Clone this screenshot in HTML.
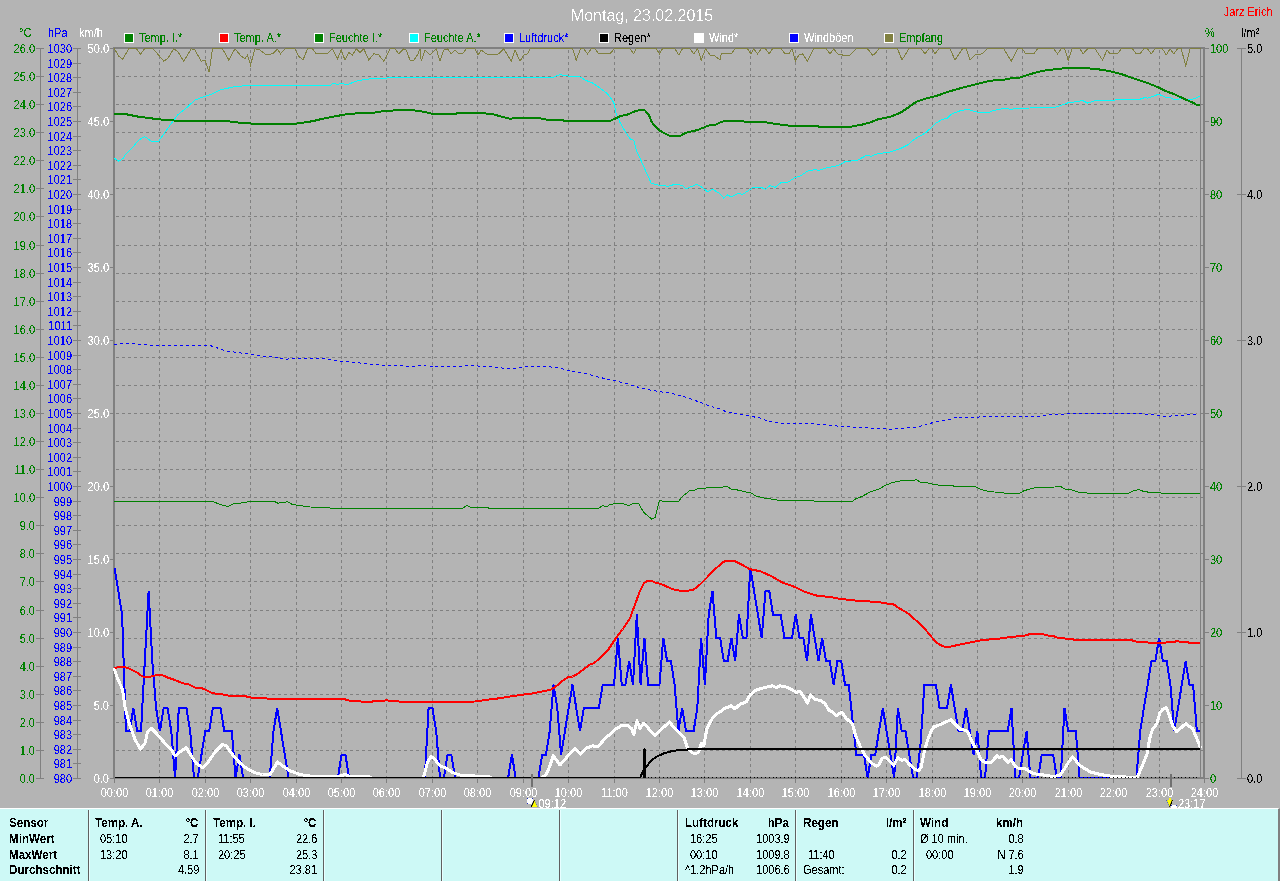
<!DOCTYPE html>
<html lang="de"><head><meta charset="utf-8"><title>Montag, 23.02.2015</title>
<style>
html,body{margin:0;padding:0;background:#b4b4b4;}
body{width:1280px;height:881px;position:relative;overflow:hidden;font-family:"Liberation Sans",Arial,sans-serif;}
.tbl{position:absolute;left:0;top:808px;width:1280px;height:73px;background:#cdf9f6;border-top:1px solid #fff;border-right:2px solid #808080;box-sizing:border-box;font-size:12px;color:#000;}
.dv{position:absolute;top:1px;bottom:0;width:1px;background:#606060;border-right:1px solid #e8ffff;}
.c{position:absolute;white-space:nowrap;line-height:14px;letter-spacing:0;filter:url(#na);transform:scaleX(.917);transform-origin:0 0;}
.r{transform-origin:100% 0;}
.b{font-weight:bold;transform:scaleX(.967);}
</style></head><body>
<svg width="1280" height="808" viewBox="0 0 1280 808" style="position:absolute;left:0;top:0" font-family="Liberation Sans, Arial, sans-serif" font-size="12px">
<rect width="1280" height="808" fill="#b4b4b4"/>
<defs><filter id="na" color-interpolation-filters="sRGB"><feComponentTransfer><feFuncA type="discrete" tableValues="0 0 0 0 0 0 0 0 0 1 1 1 1 1 1 1 1 1 1 1"/></feComponentTransfer></filter><filter id="nb" color-interpolation-filters="sRGB"><feComponentTransfer><feFuncA type="discrete" tableValues="0 0 0 0 0 0 0 0 0 0 0 0 0 1 1 1 1 1 1 1"/></feComponentTransfer></filter></defs>
<g shape-rendering="crispEdges" fill="none">
<path d="M116,750.5H1197M116,722.5H1197M116,694.5H1197M116,666.5H1197M116,638.5H1197M116,610.5H1197M116,581.5H1197M116,553.5H1197M116,525.5H1197M116,497.5H1197M116,469.5H1197M116,441.5H1197M116,413.5H1197M116,385.5H1197M116,357.5H1197M116,329.5H1197M116,301.5H1197M116,273.5H1197M116,245.5H1197M116,216.5H1197M116,188.5H1197M116,160.5H1197M116,132.5H1197M116,104.5H1197M116,76.5H1197" stroke="#808080" stroke-width="1" stroke-dasharray="3 3"/>
<path d="M159.5,50V778M205.5,50V778M250.5,50V778M296.5,50V778M341.5,50V778M386.5,50V778M432.5,50V778M477.5,50V778M523.5,50V778M568.5,50V778M614.5,50V778M659.5,50V778M704.5,50V778M750.5,50V778M795.5,50V778M841.5,50V778M886.5,50V778M932.5,50V778M977.5,50V778M1022.5,50V778M1068.5,50V778M1113.5,50V778M1159.5,50V778" stroke="#808080" stroke-width="1" stroke-dasharray="3 3"/>
<clipPath id="pc"><rect x="113" y="47" width="1092" height="731"/></clipPath>
<path d="M115,777.5H1203" stroke="#808080" stroke-width="1"/>
<path d="M114,47V779M113,48H1205M1204,47V779" stroke="#808080" stroke-width="2"/>
<g clip-path="url(#pc)">
<polyline points="114.0,48.2 118.8,56.2 122.5,59.5 128.8,48.8 136.2,48.2 140.5,54.2 144.5,48.8 152.5,48.8 157.5,53.8 163.8,61.2 167.5,58.8 173.8,48.8 177.5,51.2 183.8,61.2 191.2,48.8 195.0,50.0 201.2,61.2 205.0,60.0 209.2,72.0 212.5,48.8 222.5,48.8 228.8,60.0 235.0,48.8 241.2,56.2 245.0,58.8 247.5,55.0 250.5,65.0 255.0,48.8 260.0,50.0 266.2,55.0 272.5,53.8 277.5,49.2 280.5,53.8 285.0,48.8 295.0,48.8 298.8,56.2 303.0,60.0 307.5,48.8 312.5,48.8 316.2,53.8 327.5,53.8 332.5,48.8 337.5,58.8 341.2,50.0 345.0,60.0 348.8,52.5 352.5,55.0 356.2,48.8 360.0,52.5 363.8,48.8 368.8,60.0 373.8,53.8 378.8,55.0 383.8,61.2 390.0,48.8 395.0,48.8 398.8,53.8 403.8,48.8 406.2,50.0 410.0,60.0 413.8,60.0 417.5,55.0 420.0,48.8 421.2,61.2 425.0,50.0 430.0,55.0 436.2,48.8 440.0,61.2 443.8,50.0 447.5,48.8 451.2,53.8 455.0,50.0 458.8,53.8 462.5,53.8 466.2,48.8 475.0,48.8 478.2,55.0 481.2,50.0 486.2,53.8 492.5,55.0 498.8,53.8 503.8,48.8 511.2,61.2 515.0,50.0 520.0,61.2 523.8,55.0 527.5,53.8 530.0,48.8 572.5,48.8 576.2,60.0 580.5,48.8 583.8,48.8 587.5,53.8 591.2,48.8 595.0,48.8 598.8,53.8 610.0,53.8 614.2,48.8 630.0,48.8 633.8,53.8 636.2,48.8 656.2,48.8 659.5,53.8 662.5,48.8 675.0,48.8 678.8,55.0 682.5,48.8 690.0,48.8 693.8,53.8 697.5,48.8 701.2,60.0 705.5,48.8 710.0,55.0 713.8,55.0 720.0,60.0 721.2,53.8 731.2,53.8 735.0,48.8 747.5,48.8 750.8,53.8 753.8,48.8 757.5,53.8 761.2,48.8 765.5,48.8 769.2,53.8 772.5,48.8 781.2,48.8 785.0,53.8 788.8,53.8 792.0,48.8 795.5,61.2 798.8,55.0 802.5,53.8 807.5,61.2 813.8,48.8 826.2,48.8 830.0,53.8 833.8,48.8 837.5,53.8 842.5,55.0 850.0,55.0 856.2,48.8 867.5,48.8 872.5,55.0 875.0,53.8 878.8,48.8 897.5,48.8 902.0,60.0 908.8,48.8 921.2,48.8 925.0,53.8 928.8,48.8 932.5,48.8 935.0,53.8 938.8,48.8 950.0,48.8 955.0,60.0 962.5,48.8 966.2,48.8 970.0,60.0 975.0,55.0 982.5,53.8 987.5,48.8 1003.8,48.8 1011.2,61.2 1017.5,48.8 1020.0,48.8 1022.5,48.8 1025.5,53.8 1033.8,53.8 1037.5,48.8 1053.8,48.8 1057.5,53.8 1061.2,48.8 1064.5,48.8 1068.2,60.0 1072.0,48.8 1080.0,48.8 1083.2,53.8 1087.5,48.8 1095.0,48.8 1102.5,60.0 1107.0,50.0 1110.0,53.8 1117.5,53.8 1121.2,48.8 1132.5,48.8 1136.2,53.8 1140.0,53.8 1143.8,48.8 1147.5,48.8 1151.2,53.8 1155.0,48.8 1162.5,48.8 1166.2,55.0 1170.0,48.8 1173.8,53.8 1177.5,48.8 1181.2,48.8 1185.8,65.8 1190.0,48.8 1200.5,48.8" stroke="#808040" stroke-width="1"/>
<polyline points="114.5,567.8 118.3,591.1 122.1,614.5 125.9,731.3 129.6,731.3 133.4,707.9 137.2,731.3 141.0,731.3 144.8,661.2 148.6,591.1 152.3,661.2 156.1,707.9 159.9,731.3 163.7,707.9 167.5,707.9 171.3,731.3 175.1,778.0 178.8,707.9 182.6,707.9 186.4,707.9 190.2,731.3 194.0,778.0 197.8,778.0 201.5,754.6 205.3,731.3 209.1,731.3 212.9,707.9 216.7,707.9 220.5,707.9 224.3,731.3 228.0,731.3 231.8,731.3 235.6,778.0 239.4,754.6 243.2,778.0 247.0,778.0 250.8,778.0 254.5,778.0 258.3,778.0 262.1,778.0 265.9,778.0 269.7,778.0 273.5,731.3 277.2,707.9 281.0,731.3 284.8,754.6 288.6,778.0 292.4,778.0 296.2,778.0 300.0,778.0 303.7,778.0 307.5,778.0 311.3,778.0 315.1,778.0 318.9,778.0 322.7,778.0 326.4,778.0 330.2,778.0 334.0,778.0 337.8,778.0 341.6,754.6 345.4,754.6 349.2,778.0 352.9,778.0 356.7,778.0 360.5,778.0 364.3,778.0 368.1,778.0 371.9,778.0 375.6,778.0 379.4,778.0 383.2,778.0 387.0,778.0 390.8,778.0 394.6,778.0 398.4,778.0 402.1,778.0 405.9,778.0 409.7,778.0 413.5,778.0 417.3,778.0 421.1,778.0 424.8,778.0 428.6,707.9 432.4,707.9 436.2,731.3 440.0,778.0 443.8,778.0 447.6,754.6 451.3,754.6 455.1,778.0 458.9,778.0 462.7,778.0 466.5,778.0 470.3,778.0 474.0,778.0 477.8,778.0 481.6,778.0 485.4,778.0 489.2,778.0 493.0,778.0 496.8,778.0 500.5,778.0 504.3,778.0 508.1,778.0 511.9,754.6 515.7,778.0 519.5,778.0 523.2,778.0 527.0,778.0 530.8,778.0 534.6,778.0 538.4,778.0 542.2,754.6 546.0,754.6 549.7,731.3 553.5,684.6 557.3,707.9 561.1,754.6 564.9,731.3 568.7,707.9 572.5,684.6 576.2,707.9 580.0,731.3 583.8,707.9 587.6,707.9 591.4,707.9 595.2,707.9 598.9,707.9 602.7,684.6 606.5,684.6 610.3,684.6 614.1,684.6 617.9,637.8 621.7,684.6 625.4,684.6 629.2,661.2 633.0,684.6 636.8,614.5 640.6,684.6 644.4,637.8 648.1,684.6 651.9,684.6 655.7,684.6 659.5,684.6 663.3,637.8 667.1,661.2 670.9,661.2 674.6,684.6 678.4,731.3 682.2,707.9 686.0,731.3 689.8,731.3 693.6,731.3 697.3,707.9 701.1,637.8 704.9,684.6 708.7,614.5 712.5,591.1 716.3,637.8 720.1,637.8 723.8,661.2 727.6,661.2 731.4,637.8 735.2,661.2 739.0,614.5 742.8,637.8 746.5,637.8 750.3,567.8 754.1,591.1 757.9,614.5 761.7,637.8 765.5,591.1 769.3,591.1 773.0,614.5 776.8,614.5 780.6,614.5 784.4,637.8 788.2,637.8 792.0,637.8 795.8,614.5 799.5,637.8 803.3,637.8 807.1,661.2 810.9,614.5 814.7,637.8 818.5,661.2 822.2,637.8 826.0,661.2 829.8,661.2 833.6,684.6 837.4,661.2 841.2,661.2 845.0,684.6 848.7,684.6 852.5,719.6 856.3,754.6 860.1,754.6 863.9,754.6 867.7,778.0 871.4,754.6 875.2,754.6 879.0,731.3 882.8,707.9 886.6,731.3 890.4,754.6 894.2,778.0 897.9,707.9 901.7,731.3 905.5,731.3 909.3,754.6 913.1,778.0 916.9,778.0 920.6,743.0 924.4,684.6 928.2,684.6 932.0,684.6 935.8,684.6 939.6,707.9 943.4,707.9 947.1,707.9 950.9,684.6 954.7,707.9 958.5,731.3 962.3,731.3 966.1,707.9 969.8,731.3 973.6,754.6 977.4,731.3 981.2,778.0 985.0,778.0 988.8,731.3 992.6,731.3 996.3,731.3 1000.1,731.3 1003.9,731.3 1007.7,731.3 1011.5,707.9 1015.3,778.0 1019.0,778.0 1022.8,754.6 1026.6,731.3 1030.4,778.0 1034.2,778.0 1038.0,778.0 1041.8,754.6 1045.5,754.6 1049.3,754.6 1053.1,754.6 1056.9,778.0 1060.7,778.0 1064.5,707.9 1068.2,731.3 1072.0,731.3 1075.8,731.3 1079.6,778.0 1083.4,778.0 1087.2,778.0 1091.0,778.0 1094.7,778.0 1098.5,778.0 1102.3,778.0 1106.1,778.0 1109.9,778.0 1113.7,778.0 1117.5,778.0 1121.2,778.0 1125.0,778.0 1128.8,778.0 1132.6,778.0 1136.4,778.0 1140.2,731.3 1143.9,707.9 1147.7,684.6 1151.5,661.2 1155.3,661.2 1159.1,637.8 1162.9,661.2 1166.7,661.2 1170.4,684.6 1174.2,731.3 1178.0,707.9 1181.8,684.6 1185.6,661.2 1189.4,684.6 1193.1,684.6 1196.9,731.3 1200.7,731.3" stroke="#0000ff" stroke-width="2" stroke-linejoin="miter"/>
<polyline points="114.5,669.5 117.5,678.2 122.5,689.5 125.0,707.0 128.8,722.0 135.0,739.5 140.5,749.0 145.0,743.2 147.5,732.0 151.2,728.2 156.2,733.2 165.0,743.2 171.2,749.5 175.0,755.8 180.0,752.0 186.2,747.5 191.2,755.8 196.2,763.2 202.5,767.5 207.5,763.2 215.0,752.0 222.5,744.5 226.2,745.8 232.5,754.5 240.0,763.2 247.5,769.0 255.0,772.8 262.5,774.5 270.0,774.5 273.8,768.2 277.5,762.0 282.5,765.8 290.0,770.8 300.0,774.5 312.5,776.5 337.5,777.0 345.0,774.5 350.0,776.5 370.0,777.0 373.8,781.0 420.0,781.0 422.0,781.0 423.8,776.5 427.5,762.0 431.2,756.5 435.0,759.5 440.0,765.8 446.2,768.2 452.5,772.5 460.0,775.0 475.0,776.0 490.0,777.0 493.8,781.0 540.0,781.0 542.5,777.0 546.2,774.5 549.5,767.0 553.2,755.8 557.0,760.8 560.0,765.0 565.0,759.5 570.0,753.2 575.0,748.2 580.5,754.0 586.2,748.2 592.5,745.8 597.5,747.0 602.5,741.5 606.2,737.0 610.0,734.5 615.0,729.5 621.2,725.8 627.5,725.2 631.2,728.2 633.8,734.5 637.0,720.8 640.0,728.2 643.8,723.2 647.5,727.0 651.2,732.0 655.0,735.8 662.5,728.2 669.5,722.0 673.8,727.5 678.8,732.0 683.8,737.0 687.5,748.2 691.2,752.0 695.0,754.0 698.8,752.0 701.2,743.2 703.8,745.8 707.0,728.2 712.5,718.2 717.5,713.2 720.0,712.0 723.8,708.8 731.2,705.8 735.0,708.8 740.0,704.2 746.2,702.0 750.0,695.0 756.2,690.0 765.0,687.5 772.5,685.8 776.2,687.5 780.0,685.8 786.2,687.0 792.5,690.0 796.2,692.5 800.0,691.2 803.8,696.8 807.5,703.0 810.5,695.0 815.0,699.5 821.2,700.5 825.0,703.8 828.8,710.0 832.5,712.0 836.2,715.8 842.0,712.0 846.2,718.4 852.5,723.9 855.6,735.6 860.3,746.6 865.0,755.2 871.2,763.0 876.7,766.1 879.1,764.5 882.2,758.3 885.3,757.2 890.0,761.4 893.9,765.3 897.8,757.5 901.7,760.3 904.8,759.4 910.3,765.3 915.0,769.2 918.9,770.8 921.2,766.9 924.4,751.2 927.5,740.3 931.4,730.2 933.8,727.0 941.6,723.9 950.9,719.7 955.6,724.7 960.3,729.4 965.0,730.2 968.1,732.5 972.8,743.4 977.5,751.2 980.6,759.1 984.5,762.2 991.6,762.2 997.0,755.6 999.4,757.5 1002.5,756.2 1008.0,762.2 1011.1,759.8 1015.8,766.9 1019.7,768.8 1025.2,768.8 1030.6,772.3 1035.3,773.9 1040.0,774.4 1047.4,775.7 1053.1,776.3 1059.6,775.7 1064.3,769.2 1069.0,761.3 1072.7,757.0 1077.4,762.6 1081.1,766.4 1090.5,772.0 1099.9,774.4 1111.1,776.3 1126.1,777.0 1137.3,777.0 1140.1,771.0 1143.9,761.7 1147.6,752.3 1149.5,739.2 1152.3,729.9 1157.0,723.3 1159.8,713.0 1162.6,709.3 1166.3,707.4 1169.1,714.9 1172.9,726.1 1176.6,731.7 1181.3,727.6 1185.6,723.7 1189.7,726.7 1192.6,728.5 1196.3,737.3 1200.2,747.1" stroke="#ffffff" stroke-width="3" stroke-linejoin="round" stroke-linecap="round"/>
<polyline points="114.5,778.0 640.0,778.0 643.0,771.1 644.5,769.0 645.8,767.5 651.2,760.6 657.5,756.2 663.8,753.4 670.0,751.6 676.2,750.5 682.5,749.9 688.8,749.4 695.0,749.0 700.0,749.0 1200.3,749.0" stroke="#000000" stroke-width="2" stroke-linejoin="round"/>
<path d="M643,778V749.5L644.5,748L646,749.5V778Z" fill="#000" stroke="none"/>
<path d="M648,777.5h1M651,777.5h1M655,777.5h1M659,777.5h1M663,777.5h1M667,777.5h1M670,777.5h1M674,777.5h1M678,777.5h1M682,777.5h1M685,777.5h1M689,777.5h1M693,777.5h1M697,777.5h1M701,777.5h1M704,777.5h1M708,777.5h1M712,777.5h1M716,777.5h1M720,777.5h1M723,777.5h1M727,777.5h1M731,777.5h1M735,777.5h1M738,777.5h1M742,777.5h1M746,777.5h1M750,777.5h1M754,777.5h1M757,777.5h1M761,777.5h1M765,777.5h1M769,777.5h1M773,777.5h1M776,777.5h1M780,777.5h1M784,777.5h1M788,777.5h1M791,777.5h1M795,777.5h1M799,777.5h1M803,777.5h1M807,777.5h1M810,777.5h1M814,777.5h1M818,777.5h1M822,777.5h1M826,777.5h1M829,777.5h1M833,777.5h1M837,777.5h1M841,777.5h1M844,777.5h1M848,777.5h1M852,777.5h1M856,777.5h1M860,777.5h1M863,777.5h1M867,777.5h1M871,777.5h1M875,777.5h1M879,777.5h1M882,777.5h1M886,777.5h1M890,777.5h1M894,777.5h1M897,777.5h1M901,777.5h1M905,777.5h1M909,777.5h1M913,777.5h1M916,777.5h1M920,777.5h1M924,777.5h1M928,777.5h1M932,777.5h1M935,777.5h1M939,777.5h1M943,777.5h1M947,777.5h1M950,777.5h1M954,777.5h1M958,777.5h1M962,777.5h1M966,777.5h1M969,777.5h1M973,777.5h1M977,777.5h1M981,777.5h1M984,777.5h1M988,777.5h1M992,777.5h1M996,777.5h1M1000,777.5h1M1003,777.5h1M1007,777.5h1M1011,777.5h1M1015,777.5h1M1019,777.5h1M1022,777.5h1M1026,777.5h1M1030,777.5h1M1034,777.5h1M1037,777.5h1M1041,777.5h1M1045,777.5h1M1049,777.5h1M1053,777.5h1M1056,777.5h1M1060,777.5h1M1064,777.5h1M1068,777.5h1M1072,777.5h1M1075,777.5h1M1079,777.5h1M1083,777.5h1M1087,777.5h1M1090,777.5h1M1094,777.5h1M1098,777.5h1M1102,777.5h1M1106,777.5h1M1109,777.5h1M1113,777.5h1M1117,777.5h1M1121,777.5h1M1125,777.5h1M1128,777.5h1M1132,777.5h1M1136,777.5h1M1140,777.5h1M1143,777.5h1M1147,777.5h1M1151,777.5h1M1155,777.5h1M1159,777.5h1M1162,777.5h1M1166,777.5h1M1170,777.5h1M1174,777.5h1M1178,777.5h1M1181,777.5h1M1185,777.5h1M1189,777.5h1M1193,777.5h1M1196,777.5h1M1200,777.5h1" stroke="#000" stroke-width="1"/>
<polyline points="114.0,344.2 132.5,343.5 150.0,345.0 175.0,345.8 210.0,345.5 217.5,348.0 225.0,350.8 250.0,354.2 260.0,355.8 275.0,357.0 285.0,359.2 300.0,358.2 320.0,358.2 337.5,360.8 360.0,363.0 370.0,364.5 400.0,365.8 412.5,366.8 420.0,365.0 432.5,367.0 462.5,366.5 470.0,365.0 475.0,365.5 482.5,366.8 495.0,367.0 505.0,368.5 515.0,368.5 522.5,367.0 547.5,366.5 560.0,368.2 570.0,370.8 585.0,373.2 600.0,377.5 612.5,380.0 625.0,383.2 637.5,387.0 650.0,390.0 660.0,391.8 670.0,393.0 682.5,396.2 692.5,399.5 702.5,403.2 710.0,406.2 717.5,408.2 720.0,408.8 722.5,410.5 737.5,414.2 750.0,416.2 760.0,418.0 767.5,421.2 780.0,423.0 810.0,423.2 830.0,425.5 850.0,427.0 865.0,427.5 872.5,428.5 885.0,428.5 890.0,429.5 900.0,428.5 915.0,427.5 925.0,425.0 937.5,421.2 950.0,419.2 957.5,417.0 962.5,418.0 977.5,417.5 981.2,416.2 1020.0,416.2 1040.0,416.2 1050.0,414.5 1070.0,413.8 1122.5,413.2 1155.0,414.5 1162.5,416.2 1180.0,415.8 1197.5,413.8" stroke="#0000ff" stroke-width="1" stroke-dasharray="3 3"/>
<polyline points="114.0,158.0 118.8,161.2 122.5,159.5 125.0,155.0 132.5,147.5 138.8,140.0 144.5,136.5 152.5,142.0 158.8,141.0 167.5,128.8 177.5,115.0 187.5,107.0 195.0,100.0 205.0,96.2 212.5,93.8 220.0,90.0 235.0,86.5 250.0,85.5 330.0,85.5 333.8,83.0 337.5,84.5 341.2,83.5 347.5,84.5 357.5,80.8 370.0,78.8 387.5,78.0 400.0,77.5 420.0,77.5 552.5,77.5 560.0,74.5 565.0,75.8 580.0,76.8 585.0,80.0 592.5,83.0 600.0,88.0 607.5,93.8 613.8,102.5 616.2,113.8 620.0,122.5 625.0,131.2 630.0,138.8 633.8,140.5 636.2,150.0 642.5,163.8 651.2,183.2 660.0,185.5 668.8,186.2 675.0,184.2 682.5,185.5 686.2,188.8 696.8,184.2 702.5,187.5 707.5,191.8 712.5,189.2 720.0,193.8 723.8,198.2 727.5,195.0 731.2,196.8 738.8,193.2 742.5,194.5 753.8,187.0 761.2,187.5 765.5,189.2 770.0,185.5 775.0,187.5 781.2,182.5 787.5,182.5 795.0,177.5 800.0,176.2 807.5,171.2 815.0,169.5 818.8,170.5 825.0,168.2 837.5,165.8 845.0,161.8 857.5,160.2 866.2,155.5 871.2,156.2 877.5,153.8 890.0,152.0 900.0,148.8 907.5,145.0 915.0,138.8 926.2,132.5 935.0,123.8 941.2,120.0 947.5,118.0 951.2,114.2 960.0,110.8 967.5,109.2 975.0,111.8 987.5,113.0 992.5,110.8 1005.0,108.2 1011.2,109.5 1015.0,108.2 1020.0,108.2 1055.0,107.5 1060.0,105.8 1067.5,103.0 1075.0,101.8 1082.5,100.5 1087.5,103.0 1095.0,100.8 1115.0,100.0 1140.0,99.2 1145.0,97.5 1147.5,98.2 1158.8,94.2 1165.0,97.0 1170.0,97.5 1175.0,100.0 1180.0,98.8 1187.5,99.2 1192.5,99.2 1200.5,96.2" stroke="#00ffff" stroke-width="1"/>
<polyline points="114.0,501.2 212.5,501.2 220.0,504.5 228.0,506.5 233.8,503.8 245.0,502.5 250.0,501.2 273.8,501.2 278.0,503.2 287.5,501.8 292.5,504.5 300.0,505.5 310.0,507.0 328.8,507.5 330.0,508.2 420.0,508.2 462.5,508.2 466.8,505.5 471.2,507.5 487.5,507.5 488.8,508.2 598.8,508.2 602.5,505.5 606.2,507.0 610.0,504.5 617.5,503.2 623.8,503.8 628.8,505.5 633.8,503.2 638.8,503.8 643.8,512.5 651.8,519.2 655.0,517.5 659.5,500.5 662.5,501.2 678.8,501.2 682.5,496.2 690.0,490.5 693.8,490.5 697.5,488.8 705.0,488.2 708.8,487.2 720.0,487.2 722.5,487.2 725.0,486.0 727.5,486.5 731.2,489.2 737.5,490.0 742.5,491.2 751.2,493.0 756.2,496.2 765.0,498.2 772.5,499.2 780.0,500.5 812.5,500.5 815.0,501.2 852.5,501.2 855.0,499.2 862.5,496.2 870.0,492.0 878.8,489.2 885.0,485.5 892.5,482.5 897.5,481.5 905.0,480.2 915.0,480.2 916.2,479.2 920.0,482.0 926.2,482.5 932.5,484.2 938.8,485.2 952.5,485.2 953.8,486.2 975.0,486.2 980.0,489.2 987.5,491.2 996.2,492.2 1006.2,493.2 1020.0,493.2 1023.8,490.8 1032.5,488.2 1040.0,487.2 1055.0,487.0 1060.0,486.0 1065.0,489.2 1070.0,489.5 1078.8,492.2 1088.8,493.2 1128.8,493.2 1132.5,491.2 1138.8,489.5 1143.8,491.5 1151.2,492.5 1160.0,492.5 1161.2,493.2 1200.5,493.2" stroke="#008000" stroke-width="1"/>
<polyline points="114.5,668.2 118.8,667.0 125.0,667.0 131.2,669.5 137.5,672.8 142.5,676.5 151.2,676.5 157.5,675.0 162.5,675.2 167.5,677.5 175.0,680.0 182.5,683.2 188.8,684.5 195.0,687.5 201.2,687.8 207.5,690.8 212.5,693.2 220.0,694.0 230.0,695.8 245.0,696.2 252.5,697.8 265.0,698.2 270.0,699.0 343.8,699.0 350.0,700.8 360.0,701.2 362.5,702.0 371.2,702.0 373.8,701.0 383.8,700.8 386.2,700.0 390.0,701.0 397.5,701.0 400.0,702.0 420.0,702.0 432.5,702.0 475.0,701.5 485.0,700.0 500.0,698.2 510.0,696.5 520.0,695.0 530.0,693.8 540.0,692.0 551.2,689.5 556.2,686.2 562.5,680.8 567.5,677.5 572.5,676.5 577.5,674.0 585.0,668.2 590.0,664.5 593.8,663.2 600.0,658.2 607.5,650.8 615.0,639.5 622.5,629.5 630.0,618.2 635.0,604.5 640.0,590.8 643.8,583.2 647.5,580.8 651.2,580.8 655.0,582.5 661.2,584.0 667.5,587.0 673.8,589.5 680.0,590.8 687.5,590.8 693.8,589.5 700.0,584.5 707.5,577.0 713.8,570.0 720.0,565.0 722.5,562.0 727.5,560.8 735.0,561.2 742.5,565.0 750.0,569.2 760.0,571.2 770.0,575.5 782.5,582.5 795.0,587.0 805.0,592.0 817.5,595.8 830.0,597.0 840.0,598.8 850.0,600.0 862.5,601.2 877.5,601.8 885.0,603.2 893.8,604.5 900.0,608.8 907.5,613.0 915.0,619.5 922.5,626.2 930.0,635.0 935.0,641.2 940.0,645.0 945.0,646.8 950.0,646.8 960.0,644.5 970.0,642.5 982.5,640.0 997.5,638.8 1012.5,636.8 1020.0,636.2 1026.9,635.3 1028.7,634.4 1043.7,634.4 1045.6,635.3 1053.1,635.9 1058.7,638.1 1071.8,639.0 1073.7,639.6 1129.8,639.6 1135.4,641.5 1146.7,641.9 1148.6,642.8 1165.4,642.8 1167.3,641.9 1174.8,641.9 1176.6,640.9 1178.5,641.5 1187.9,642.2 1189.7,643.2 1200.2,643.2" stroke="#ff0000" stroke-width="2" stroke-linejoin="round"/>
<polyline points="114.0,114.0 125.0,114.0 137.5,116.5 150.0,118.2 165.0,120.0 180.0,120.8 225.0,120.8 237.5,122.5 255.0,123.8 295.0,123.8 312.5,121.2 325.0,118.2 345.0,114.5 360.0,113.0 375.0,112.5 382.5,111.2 397.5,110.2 412.5,110.2 420.0,111.0 432.5,113.8 455.0,113.8 460.0,112.8 480.0,112.8 492.5,114.2 500.0,116.2 510.0,118.8 517.5,117.8 537.5,117.8 547.5,119.8 560.0,119.8 565.0,120.8 610.0,120.8 615.0,118.8 620.0,116.2 627.5,114.5 635.0,111.2 640.0,110.0 644.5,110.0 648.8,114.5 651.2,121.2 655.0,126.2 660.0,130.8 668.8,135.5 681.2,135.5 685.0,133.0 697.5,130.0 710.0,125.0 716.2,124.5 720.0,122.5 725.0,120.8 741.2,120.8 745.0,121.8 762.5,121.8 775.0,123.8 790.0,125.8 815.0,125.8 820.0,126.8 850.0,126.8 862.5,124.5 870.0,122.5 877.5,119.5 890.0,116.8 900.0,113.0 907.5,108.0 916.2,101.8 925.0,98.8 937.5,95.5 950.0,91.2 965.0,87.0 977.5,83.8 990.0,80.8 1005.0,79.5 1012.5,78.0 1020.0,77.5 1030.0,74.2 1042.5,70.8 1055.0,69.2 1067.5,68.0 1085.0,68.0 1097.5,69.2 1110.0,71.2 1122.5,74.5 1135.0,78.8 1147.5,83.0 1157.5,87.0 1165.0,90.8 1175.0,94.5 1185.0,99.2 1192.5,102.5 1196.2,104.5 1200.5,105.0" stroke="#008000" stroke-width="2" stroke-linejoin="round"/>
</g>
<path d="M40.5,48V779M77.5,48V779M1241.5,48V779M1200.5,49V778M36,778.5H44M36,750.5H44M36,722.5H44M36,694.5H44M36,666.5H44M36,638.5H44M36,610.5H44M36,581.5H44M36,553.5H44M36,525.5H44M36,497.5H44M36,469.5H44M36,441.5H44M36,413.5H44M36,385.5H44M36,357.5H44M36,329.5H44M36,301.5H44M36,273.5H44M36,245.5H44M36,216.5H44M36,188.5H44M36,160.5H44M36,132.5H44M36,104.5H44M36,76.5H44M36,48.5H44M73,778.5H81M73,763.5H81M73,749.5H81M73,734.5H81M73,720.5H81M73,705.5H81M73,690.5H81M73,676.5H81M73,661.5H81M73,647.5H81M73,632.5H81M73,617.5H81M73,603.5H81M73,588.5H81M73,574.5H81M73,559.5H81M73,544.5H81M73,530.5H81M73,515.5H81M73,501.5H81M73,486.5H81M73,471.5H81M73,457.5H81M73,442.5H81M73,428.5H81M73,413.5H81M73,398.5H81M73,384.5H81M73,369.5H81M73,355.5H81M73,340.5H81M73,325.5H81M73,311.5H81M73,296.5H81M73,282.5H81M73,267.5H81M73,252.5H81M73,238.5H81M73,223.5H81M73,209.5H81M73,194.5H81M73,179.5H81M73,165.5H81M73,150.5H81M73,136.5H81M73,121.5H81M73,106.5H81M73,92.5H81M73,77.5H81M73,63.5H81M73,48.5H81M110,778.5H113M1205,778.5H1209M110,705.5H113M1205,705.5H1209M110,632.5H113M1205,632.5H1209M110,559.5H113M1205,559.5H1209M110,486.5H113M1205,486.5H1209M110,413.5H113M1205,413.5H1209M110,340.5H113M1205,340.5H1209M110,267.5H113M1205,267.5H1209M110,194.5H113M1205,194.5H1209M110,121.5H113M1205,121.5H1209M110,48.5H113M1205,48.5H1209M1237,778.5H1246M1237,632.5H1246M1237,486.5H1246M1237,340.5H1246M1237,194.5H1246M1237,48.5H1246M1200,750.5H1203M1200,722.5H1203M1200,694.5H1203M1200,666.5H1203M1200,638.5H1203M1200,610.5H1203M1200,581.5H1203M1200,553.5H1203M1200,525.5H1203M1200,497.5H1203M1200,469.5H1203M1200,441.5H1203M1200,413.5H1203M1200,385.5H1203M1200,357.5H1203M1200,329.5H1203M1200,301.5H1203M1200,273.5H1203M1200,245.5H1203M1200,216.5H1203M1200,188.5H1203M1200,160.5H1203M1200,132.5H1203M1200,104.5H1203M1200,76.5H1203M114.5,779V783M159.5,779V783M205.5,779V783M250.5,779V783M296.5,779V783M341.5,779V783M386.5,779V783M432.5,779V783M477.5,779V783M523.5,779V783M568.5,779V783M614.5,779V783M659.5,779V783M704.5,779V783M750.5,779V783M795.5,779V783M841.5,779V783M886.5,779V783M932.5,779V783M977.5,779V783M1022.5,779V783M1068.5,779V783M1113.5,779V783M1159.5,779V783M1204.5,779V783M115,778.5H1203" stroke="#808080" stroke-width="1"/>
<path d="M532,774V787M1171,774V787" stroke="#707070" stroke-width="2"/>
</g>
<text x="642" y="21" fill="#ffffff" text-anchor="middle" font-size="16px" filter="url(#nb)">Montag, 23.02.2015</text>
<g filter="url(#na)">
<text transform="translate(1272.5 16) scale(.917 1)" fill="#ff0000" text-anchor="end">Jarz Erich</text>
<text transform="translate(19 37) scale(.917 1)" fill="#008000">°C</text>
<text transform="translate(48 37) scale(.917 1)" fill="#0000ff">hPa</text>
<text transform="translate(79 37) scale(.917 1)" fill="#ffffff">km/h</text>
<text transform="translate(1205 37) scale(.917 1)" fill="#008000">%</text>
<text transform="translate(1241 37) scale(.917 1)" fill="#000000">l/m²</text>
<text transform="translate(35 782.5) scale(.917 1)" fill="#008000" text-anchor="end">0.0</text>
<text transform="translate(35 754.5) scale(.917 1)" fill="#008000" text-anchor="end">1.0</text>
<text transform="translate(35 726.5) scale(.917 1)" fill="#008000" text-anchor="end">2.0</text>
<text transform="translate(35 698.5) scale(.917 1)" fill="#008000" text-anchor="end">3.0</text>
<text transform="translate(35 670.5) scale(.917 1)" fill="#008000" text-anchor="end">4.0</text>
<text transform="translate(35 642.5) scale(.917 1)" fill="#008000" text-anchor="end">5.0</text>
<text transform="translate(35 614.5) scale(.917 1)" fill="#008000" text-anchor="end">6.0</text>
<text transform="translate(35 585.5) scale(.917 1)" fill="#008000" text-anchor="end">7.0</text>
<text transform="translate(35 557.5) scale(.917 1)" fill="#008000" text-anchor="end">8.0</text>
<text transform="translate(35 529.5) scale(.917 1)" fill="#008000" text-anchor="end">9.0</text>
<text transform="translate(35 501.5) scale(.917 1)" fill="#008000" text-anchor="end">10.0</text>
<text transform="translate(35 473.5) scale(.917 1)" fill="#008000" text-anchor="end">11.0</text>
<text transform="translate(35 445.5) scale(.917 1)" fill="#008000" text-anchor="end">12.0</text>
<text transform="translate(35 417.5) scale(.917 1)" fill="#008000" text-anchor="end">13.0</text>
<text transform="translate(35 389.5) scale(.917 1)" fill="#008000" text-anchor="end">14.0</text>
<text transform="translate(35 361.5) scale(.917 1)" fill="#008000" text-anchor="end">15.0</text>
<text transform="translate(35 333.5) scale(.917 1)" fill="#008000" text-anchor="end">16.0</text>
<text transform="translate(35 305.5) scale(.917 1)" fill="#008000" text-anchor="end">17.0</text>
<text transform="translate(35 277.5) scale(.917 1)" fill="#008000" text-anchor="end">18.0</text>
<text transform="translate(35 249.5) scale(.917 1)" fill="#008000" text-anchor="end">19.0</text>
<text transform="translate(35 220.5) scale(.917 1)" fill="#008000" text-anchor="end">20.0</text>
<text transform="translate(35 192.5) scale(.917 1)" fill="#008000" text-anchor="end">21.0</text>
<text transform="translate(35 164.5) scale(.917 1)" fill="#008000" text-anchor="end">22.0</text>
<text transform="translate(35 136.5) scale(.917 1)" fill="#008000" text-anchor="end">23.0</text>
<text transform="translate(35 108.5) scale(.917 1)" fill="#008000" text-anchor="end">24.0</text>
<text transform="translate(35 80.5) scale(.917 1)" fill="#008000" text-anchor="end">25.0</text>
<text transform="translate(35 52.5) scale(.917 1)" fill="#008000" text-anchor="end">26.0</text>
<text transform="translate(72 782.5) scale(.917 1)" fill="#0000ff" text-anchor="end">980</text>
<text transform="translate(72 767.5) scale(.917 1)" fill="#0000ff" text-anchor="end">981</text>
<text transform="translate(72 753.5) scale(.917 1)" fill="#0000ff" text-anchor="end">982</text>
<text transform="translate(72 738.5) scale(.917 1)" fill="#0000ff" text-anchor="end">983</text>
<text transform="translate(72 724.5) scale(.917 1)" fill="#0000ff" text-anchor="end">984</text>
<text transform="translate(72 709.5) scale(.917 1)" fill="#0000ff" text-anchor="end">985</text>
<text transform="translate(72 694.5) scale(.917 1)" fill="#0000ff" text-anchor="end">986</text>
<text transform="translate(72 680.5) scale(.917 1)" fill="#0000ff" text-anchor="end">987</text>
<text transform="translate(72 665.5) scale(.917 1)" fill="#0000ff" text-anchor="end">988</text>
<text transform="translate(72 651.5) scale(.917 1)" fill="#0000ff" text-anchor="end">989</text>
<text transform="translate(72 636.5) scale(.917 1)" fill="#0000ff" text-anchor="end">990</text>
<text transform="translate(72 621.5) scale(.917 1)" fill="#0000ff" text-anchor="end">991</text>
<text transform="translate(72 607.5) scale(.917 1)" fill="#0000ff" text-anchor="end">992</text>
<text transform="translate(72 592.5) scale(.917 1)" fill="#0000ff" text-anchor="end">993</text>
<text transform="translate(72 578.5) scale(.917 1)" fill="#0000ff" text-anchor="end">994</text>
<text transform="translate(72 563.5) scale(.917 1)" fill="#0000ff" text-anchor="end">995</text>
<text transform="translate(72 548.5) scale(.917 1)" fill="#0000ff" text-anchor="end">996</text>
<text transform="translate(72 534.5) scale(.917 1)" fill="#0000ff" text-anchor="end">997</text>
<text transform="translate(72 519.5) scale(.917 1)" fill="#0000ff" text-anchor="end">998</text>
<text transform="translate(72 505.5) scale(.917 1)" fill="#0000ff" text-anchor="end">999</text>
<text transform="translate(72 490.5) scale(.917 1)" fill="#0000ff" text-anchor="end">1000</text>
<text transform="translate(72 475.5) scale(.917 1)" fill="#0000ff" text-anchor="end">1001</text>
<text transform="translate(72 461.5) scale(.917 1)" fill="#0000ff" text-anchor="end">1002</text>
<text transform="translate(72 446.5) scale(.917 1)" fill="#0000ff" text-anchor="end">1003</text>
<text transform="translate(72 432.5) scale(.917 1)" fill="#0000ff" text-anchor="end">1004</text>
<text transform="translate(72 417.5) scale(.917 1)" fill="#0000ff" text-anchor="end">1005</text>
<text transform="translate(72 402.5) scale(.917 1)" fill="#0000ff" text-anchor="end">1006</text>
<text transform="translate(72 388.5) scale(.917 1)" fill="#0000ff" text-anchor="end">1007</text>
<text transform="translate(72 373.5) scale(.917 1)" fill="#0000ff" text-anchor="end">1008</text>
<text transform="translate(72 359.5) scale(.917 1)" fill="#0000ff" text-anchor="end">1009</text>
<text transform="translate(72 344.5) scale(.917 1)" fill="#0000ff" text-anchor="end">1010</text>
<text transform="translate(72 329.5) scale(.917 1)" fill="#0000ff" text-anchor="end">1011</text>
<text transform="translate(72 315.5) scale(.917 1)" fill="#0000ff" text-anchor="end">1012</text>
<text transform="translate(72 300.5) scale(.917 1)" fill="#0000ff" text-anchor="end">1013</text>
<text transform="translate(72 286.5) scale(.917 1)" fill="#0000ff" text-anchor="end">1014</text>
<text transform="translate(72 271.5) scale(.917 1)" fill="#0000ff" text-anchor="end">1015</text>
<text transform="translate(72 256.5) scale(.917 1)" fill="#0000ff" text-anchor="end">1016</text>
<text transform="translate(72 242.5) scale(.917 1)" fill="#0000ff" text-anchor="end">1017</text>
<text transform="translate(72 227.5) scale(.917 1)" fill="#0000ff" text-anchor="end">1018</text>
<text transform="translate(72 213.5) scale(.917 1)" fill="#0000ff" text-anchor="end">1019</text>
<text transform="translate(72 198.5) scale(.917 1)" fill="#0000ff" text-anchor="end">1020</text>
<text transform="translate(72 183.5) scale(.917 1)" fill="#0000ff" text-anchor="end">1021</text>
<text transform="translate(72 169.5) scale(.917 1)" fill="#0000ff" text-anchor="end">1022</text>
<text transform="translate(72 154.5) scale(.917 1)" fill="#0000ff" text-anchor="end">1023</text>
<text transform="translate(72 140.5) scale(.917 1)" fill="#0000ff" text-anchor="end">1024</text>
<text transform="translate(72 125.5) scale(.917 1)" fill="#0000ff" text-anchor="end">1025</text>
<text transform="translate(72 110.5) scale(.917 1)" fill="#0000ff" text-anchor="end">1026</text>
<text transform="translate(72 96.5) scale(.917 1)" fill="#0000ff" text-anchor="end">1027</text>
<text transform="translate(72 81.5) scale(.917 1)" fill="#0000ff" text-anchor="end">1028</text>
<text transform="translate(72 67.5) scale(.917 1)" fill="#0000ff" text-anchor="end">1029</text>
<text transform="translate(72 52.5) scale(.917 1)" fill="#0000ff" text-anchor="end">1030</text>
<text transform="translate(109 782.5) scale(.917 1)" fill="#ffffff" text-anchor="end">0.0</text>
<text transform="translate(1210 782.5) scale(.917 1)" fill="#008000">0</text>
<text transform="translate(109 709.5) scale(.917 1)" fill="#ffffff" text-anchor="end">5.0</text>
<text transform="translate(1210 709.5) scale(.917 1)" fill="#008000">10</text>
<text transform="translate(109 636.5) scale(.917 1)" fill="#ffffff" text-anchor="end">10.0</text>
<text transform="translate(1210 636.5) scale(.917 1)" fill="#008000">20</text>
<text transform="translate(109 563.5) scale(.917 1)" fill="#ffffff" text-anchor="end">15.0</text>
<text transform="translate(1210 563.5) scale(.917 1)" fill="#008000">30</text>
<text transform="translate(109 490.5) scale(.917 1)" fill="#ffffff" text-anchor="end">20.0</text>
<text transform="translate(1210 490.5) scale(.917 1)" fill="#008000">40</text>
<text transform="translate(109 417.5) scale(.917 1)" fill="#ffffff" text-anchor="end">25.0</text>
<text transform="translate(1210 417.5) scale(.917 1)" fill="#008000">50</text>
<text transform="translate(109 344.5) scale(.917 1)" fill="#ffffff" text-anchor="end">30.0</text>
<text transform="translate(1210 344.5) scale(.917 1)" fill="#008000">60</text>
<text transform="translate(109 271.5) scale(.917 1)" fill="#ffffff" text-anchor="end">35.0</text>
<text transform="translate(1210 271.5) scale(.917 1)" fill="#008000">70</text>
<text transform="translate(109 198.5) scale(.917 1)" fill="#ffffff" text-anchor="end">40.0</text>
<text transform="translate(1210 198.5) scale(.917 1)" fill="#008000">80</text>
<text transform="translate(109 125.5) scale(.917 1)" fill="#ffffff" text-anchor="end">45.0</text>
<text transform="translate(1210 125.5) scale(.917 1)" fill="#008000">90</text>
<text transform="translate(109 52.5) scale(.917 1)" fill="#ffffff" text-anchor="end">50.0</text>
<text transform="translate(1210 52.5) scale(.917 1)" fill="#008000">100</text>
<text transform="translate(1247 782.5) scale(.917 1)" fill="#000000">0.0</text>
<text transform="translate(1247 636.5) scale(.917 1)" fill="#000000">1.0</text>
<text transform="translate(1247 490.5) scale(.917 1)" fill="#000000">2.0</text>
<text transform="translate(1247 344.5) scale(.917 1)" fill="#000000">3.0</text>
<text transform="translate(1247 198.5) scale(.917 1)" fill="#000000">4.0</text>
<text transform="translate(1247 52.5) scale(.917 1)" fill="#000000">5.0</text>
<text transform="translate(114.5 797) scale(.917 1)" fill="#ffffff" text-anchor="middle">00:00</text>
<text transform="translate(159.5 797) scale(.917 1)" fill="#ffffff" text-anchor="middle">01:00</text>
<text transform="translate(205.5 797) scale(.917 1)" fill="#ffffff" text-anchor="middle">02:00</text>
<text transform="translate(250.5 797) scale(.917 1)" fill="#ffffff" text-anchor="middle">03:00</text>
<text transform="translate(296.5 797) scale(.917 1)" fill="#ffffff" text-anchor="middle">04:00</text>
<text transform="translate(341.5 797) scale(.917 1)" fill="#ffffff" text-anchor="middle">05:00</text>
<text transform="translate(386.5 797) scale(.917 1)" fill="#ffffff" text-anchor="middle">06:00</text>
<text transform="translate(432.5 797) scale(.917 1)" fill="#ffffff" text-anchor="middle">07:00</text>
<text transform="translate(477.5 797) scale(.917 1)" fill="#ffffff" text-anchor="middle">08:00</text>
<text transform="translate(523.5 797) scale(.917 1)" fill="#ffffff" text-anchor="middle">09:00</text>
<text transform="translate(568.5 797) scale(.917 1)" fill="#ffffff" text-anchor="middle">10:00</text>
<text transform="translate(614.5 797) scale(.917 1)" fill="#ffffff" text-anchor="middle">11:00</text>
<text transform="translate(659.5 797) scale(.917 1)" fill="#ffffff" text-anchor="middle">12:00</text>
<text transform="translate(704.5 797) scale(.917 1)" fill="#ffffff" text-anchor="middle">13:00</text>
<text transform="translate(750.5 797) scale(.917 1)" fill="#ffffff" text-anchor="middle">14:00</text>
<text transform="translate(795.5 797) scale(.917 1)" fill="#ffffff" text-anchor="middle">15:00</text>
<text transform="translate(841.5 797) scale(.917 1)" fill="#ffffff" text-anchor="middle">16:00</text>
<text transform="translate(886.5 797) scale(.917 1)" fill="#ffffff" text-anchor="middle">17:00</text>
<text transform="translate(932.5 797) scale(.917 1)" fill="#ffffff" text-anchor="middle">18:00</text>
<text transform="translate(977.5 797) scale(.917 1)" fill="#ffffff" text-anchor="middle">19:00</text>
<text transform="translate(1022.5 797) scale(.917 1)" fill="#ffffff" text-anchor="middle">20:00</text>
<text transform="translate(1068.5 797) scale(.917 1)" fill="#ffffff" text-anchor="middle">21:00</text>
<text transform="translate(1113.5 797) scale(.917 1)" fill="#ffffff" text-anchor="middle">22:00</text>
<text transform="translate(1159.5 797) scale(.917 1)" fill="#ffffff" text-anchor="middle">23:00</text>
<text transform="translate(1204.5 797) scale(.917 1)" fill="#ffffff" text-anchor="middle">24:00</text>
<rect x="124.5" y="33.5" width="9" height="9" fill="#008000" stroke="#ffffff" stroke-width="1" shape-rendering="crispEdges"/>
<text transform="translate(139 42) scale(.917 1)" fill="#008000">Temp. I.*</text>
<rect x="219.5" y="33.5" width="9" height="9" fill="#ff0000" stroke="#ffffff" stroke-width="1" shape-rendering="crispEdges"/>
<text transform="translate(234 42) scale(.917 1)" fill="#008000">Temp. A.*</text>
<rect x="314.5" y="33.5" width="9" height="9" fill="#008000" stroke="#ffffff" stroke-width="1" shape-rendering="crispEdges"/>
<text transform="translate(329 42) scale(.917 1)" fill="#008000">Feuchte I.*</text>
<rect x="409.5" y="33.5" width="9" height="9" fill="#00ffff" stroke="#ffffff" stroke-width="1" shape-rendering="crispEdges"/>
<text transform="translate(424 42) scale(.917 1)" fill="#008000">Feuchte A.*</text>
<rect x="504.5" y="33.5" width="9" height="9" fill="#0000ff" stroke="#ffffff" stroke-width="1" shape-rendering="crispEdges"/>
<text transform="translate(519 42) scale(.917 1)" fill="#0000ff">Luftdruck*</text>
<rect x="599.5" y="33.5" width="9" height="9" fill="#000000" stroke="#ffffff" stroke-width="1" shape-rendering="crispEdges"/>
<text transform="translate(614 42) scale(.917 1)" fill="#000000">Regen*</text>
<rect x="694.5" y="33.5" width="9" height="9" fill="#ffffff" stroke="#ffffff" stroke-width="1" shape-rendering="crispEdges"/>
<text transform="translate(709 42) scale(.917 1)" fill="#ffffff">Wind*</text>
<rect x="789.5" y="33.5" width="9" height="9" fill="#0000ff" stroke="#ffffff" stroke-width="1" shape-rendering="crispEdges"/>
<text transform="translate(804 42) scale(.917 1)" fill="#ffffff">Windböen</text>
<rect x="884.5" y="33.5" width="9" height="9" fill="#808040" stroke="#ffffff" stroke-width="1" shape-rendering="crispEdges"/>
<text transform="translate(899 42) scale(.917 1)" fill="#008000">Empfang</text>
<circle cx="530" cy="801" r="2.9" fill="#ffffff"/>
<path d="M527.0,798.5h1M532.0,798.5h1M527.0,803.5h1M532.0,803.5h1" stroke="#2030c0" stroke-width="1" shape-rendering="crispEdges"/>
<path d="M534.5,800.3L537.6,807H531.4Z" fill="#ffff00"/>
<path d="M534.3,800.3L531.2,807" stroke="#000" stroke-width="1" fill="none"/>
<path d="M535.6,802.5l1.8,4" stroke="#4050d0" stroke-width="0.8" stroke-dasharray="1 1" fill="none"/>
<text transform="translate(538.5 808) scale(.917 1)" fill="#ffffff">09:12</text>
<circle cx="1174" cy="808" r="2.9" fill="#ffffff"/>
<path d="M1171.0,805.5h1M1176.0,805.5h1M1171.0,810.5h1M1176.0,810.5h1" stroke="#2030c0" stroke-width="1" shape-rendering="crispEdges"/>
<path d="M1168.6,798H1170.6V800H1172.4L1169.6,806.8L1166.8,800H1168.6Z" fill="#ffff00"/>
<path d="M1172.4,800.2L1169.8,806.8" stroke="#000" stroke-width="1" fill="none"/>
<path d="M1166.6,800l2,5" stroke="#4050d0" stroke-width="0.8" stroke-dasharray="1 1" fill="none"/>
<text transform="translate(1178 808) scale(.917 1)" fill="#ffffff">23:17</text>
</g>
</svg>
<div class="tbl">
<i class="dv" style="left:88px"></i>
<i class="dv" style="left:205px"></i>
<i class="dv" style="left:323px"></i>
<i class="dv" style="left:441px"></i>
<i class="dv" style="left:559px"></i>
<i class="dv" style="left:677px"></i>
<i class="dv" style="left:795px"></i>
<i class="dv" style="left:913px"></i>
<span class="c b" style="top:7px;left:9px;">Sensor</span>
<span class="c b" style="top:23px;left:9px;">MinWert</span>
<span class="c b" style="top:39px;left:9px;">MaxWert</span>
<span class="c b" style="top:54px;left:9px;">Durchschnitt</span>
<span class="c b" style="top:7px;left:95px;">Temp. A.</span>
<span class="c b r" style="top:7px;right:1080px;">°C</span>
<span class="c" style="top:23px;left:100px;">05:10</span>
<span class="c r" style="top:23px;right:1079px;">2.7</span>
<span class="c" style="top:39px;left:100px;">13:20</span>
<span class="c r" style="top:39px;right:1079px;">8.1</span>
<span class="c r" style="top:54px;right:1079px;">4.59</span>
<span class="c b" style="top:7px;left:213px;">Temp. I.</span>
<span class="c b r" style="top:7px;right:962px;">°C</span>
<span class="c" style="top:23px;left:218px;">11:55</span>
<span class="c r" style="top:23px;right:961px;">22.6</span>
<span class="c" style="top:39px;left:218px;">20:25</span>
<span class="c r" style="top:39px;right:961px;">25.3</span>
<span class="c r" style="top:54px;right:961px;">23.81</span>
<span class="c b" style="top:7px;left:685px;">Luftdruck</span>
<span class="c b r" style="top:7px;right:489px;">hPa</span>
<span class="c" style="top:23px;left:690px;">16:25</span>
<span class="c r" style="top:23px;right:488px;">1003.9</span>
<span class="c" style="top:39px;left:690px;">00:10</span>
<span class="c r" style="top:39px;right:488px;">1009.8</span>
<span class="c" style="top:54px;left:685px;">^1.2hPa/h</span>
<span class="c r" style="top:54px;right:488px;">1006.6</span>
<span class="c b" style="top:7px;left:803px;">Regen</span>
<span class="c b r" style="top:7px;right:372px;">l/m²</span>
<span class="c" style="top:39px;left:808px;">11:40</span>
<span class="c r" style="top:39px;right:371px;">0.2</span>
<span class="c" style="top:54px;left:803px;">Gesamt:</span>
<span class="c r" style="top:54px;right:371px;">0.2</span>
<span class="c b" style="top:7px;left:920px;">Wind</span>
<span class="c b r" style="top:7px;right:255px;">km/h</span>
<span class="c" style="top:23px;left:920px;">Ø 10 min.</span>
<span class="c r" style="top:23px;right:254px;">0.8</span>
<span class="c" style="top:39px;left:926px;">00:00</span>
<span class="c r" style="top:39px;right:254px;">N 7.6</span>
<span class="c r" style="top:54px;right:254px;">1.9</span>
</div>
</body></html>
